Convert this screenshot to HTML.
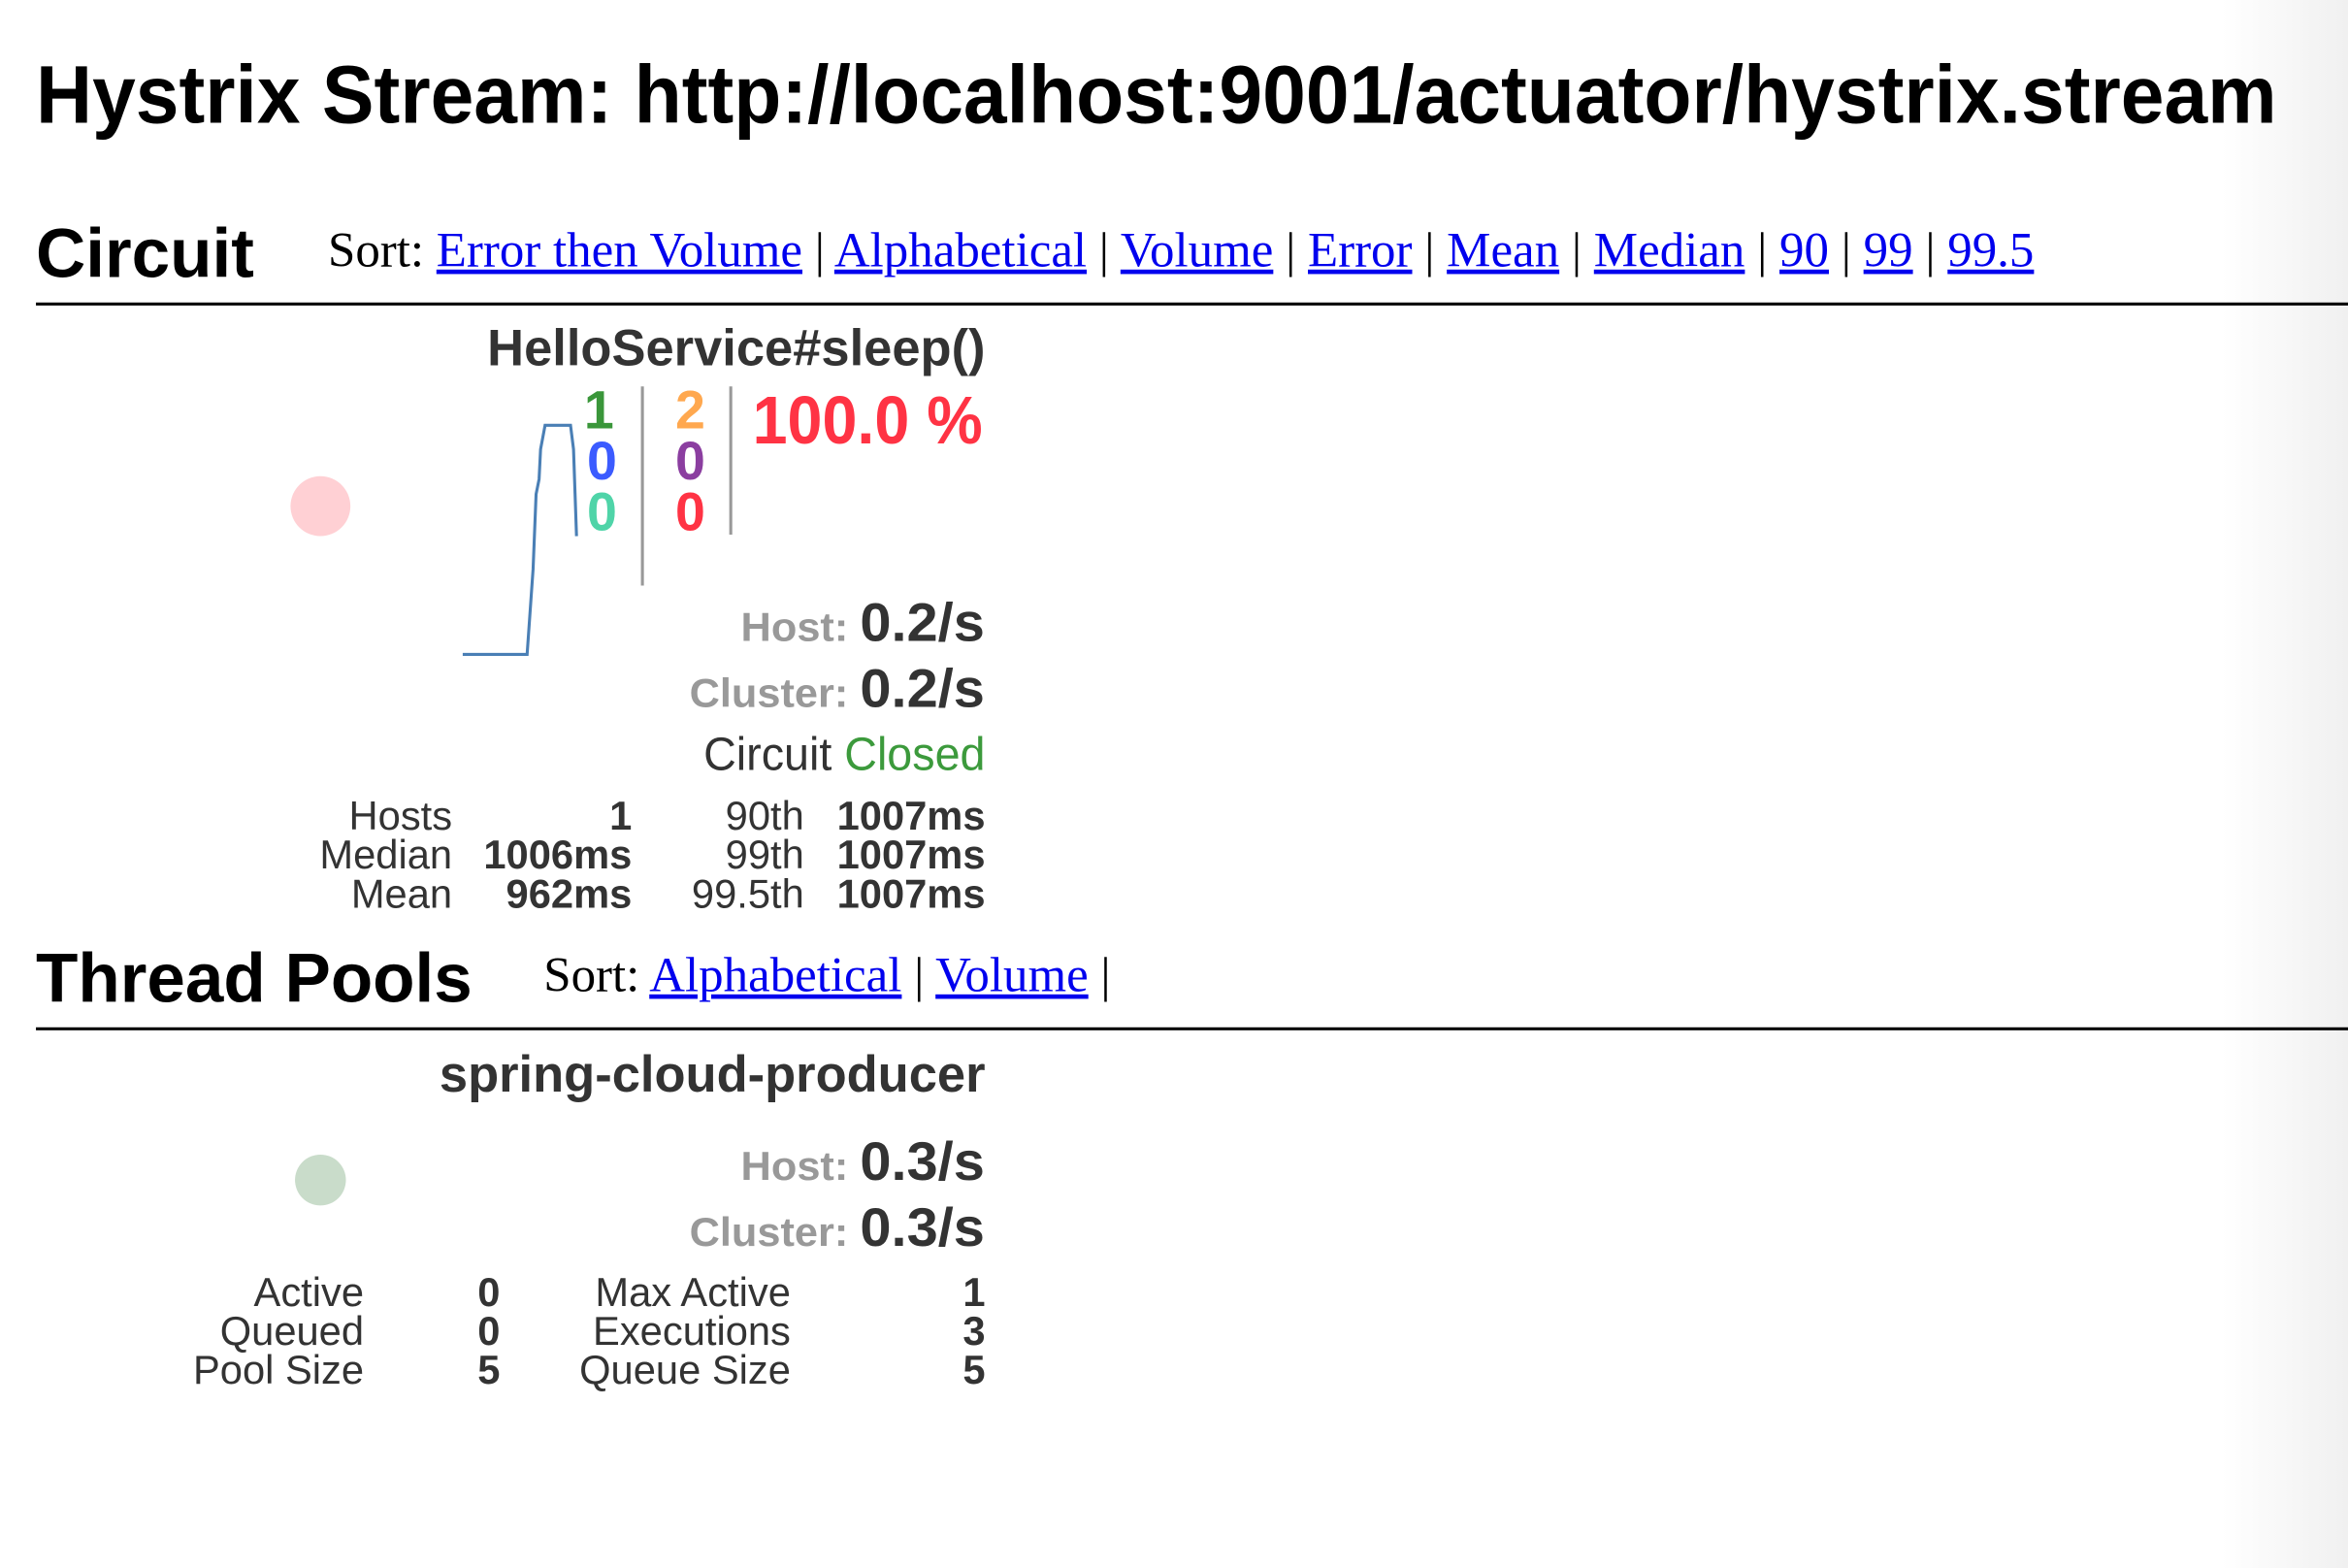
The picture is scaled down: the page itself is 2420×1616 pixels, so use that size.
<!DOCTYPE html>
<html><head><meta charset="utf-8"><style>
html,body{margin:0;padding:0;width:2420px;height:1616px;overflow:hidden;background:#fff}
#bg{position:absolute;left:0;top:0;width:2420px;height:1616px;background:linear-gradient(to right,#fff 0,#fff 2290px,#f0f0f0 2420px)}
#p{position:absolute;left:0;top:0;width:1568px;height:1047px;transform:scale(1.54337);transform-origin:0 0;font-family:"Liberation Sans",Arial,sans-serif;color:#333}
.a{position:absolute;white-space:nowrap;line-height:1}
.l{transform-origin:0 0}
.r{transform-origin:100% 0;text-align:right}
.serif{font-family:"Liberation Serif","Times New Roman",serif;color:#000}
.serif a{color:#00e;text-decoration:underline}
.hr{position:absolute;left:24px;width:1544px;height:2px;background:#000}
.b{font-weight:bold}
.g{color:#999;font-weight:bold}
</style></head><body><div id="bg"></div>
<div id="p">
<div class="a l b" style="left:24px;top:36px;font-size:55px;color:#000;transform:scaleX(.947)">Hystrix Stream: http://localhost:9001/actuator/hystrix.stream</div>
<div class="a l b" style="left:24px;top:146px;font-size:46px;color:#000">Circuit</div>
<div class="a serif" style="left:219px;top:152px;font-size:33px">Sort: <a>Error then Volume</a> | <a>Alphabetical</a> | <a>Volume</a> | <a>Error</a> | <a>Mean</a> | <a>Median</a> | <a>90</a> | <a>99</a> | <a>99.5</a></div>
<div class="hr" style="top:202px"></div>

<div class="a r b" style="right:910px;top:216px;font-size:34px">HelloService#sleep()</div>
<div style="position:absolute;left:194px;top:318px;width:40px;height:40px;border-radius:50%;background:#ffd0d4"></div>
<svg style="position:absolute;left:0;top:0" width="700" height="700"><polyline points="309,437 352,437 356,380 358,330 360,320 361,300 364,284 381,284 383,300 385,358" fill="none" stroke="#4a7fb5" stroke-width="2"/>
<line x1="429" y1="258" x2="429" y2="391" stroke="#999" stroke-width="2"/><line x1="488" y1="258" x2="488" y2="357" stroke="#999" stroke-width="2"/></svg>
<div class="a r b" style="right:1158px;top:256px;font-size:36px;color:#3a963a">1</div>
<div class="a r b" style="right:1156px;top:290px;font-size:36px;color:#3b5bff">0</div>
<div class="a r b" style="right:1156px;top:324px;font-size:36px;color:#4fd4a8">0</div>
<div class="a r b" style="right:1097px;top:256px;font-size:36px;color:#ffa84f">2</div>
<div class="a r b" style="right:1097px;top:290px;font-size:36px;color:#8b3ea0">0</div>
<div class="a r b" style="right:1097px;top:324px;font-size:36px;color:#ff3344">0</div>
<div class="a r b" style="right:912px;top:258px;font-size:45px;color:#ff3344;transform:scaleX(.93)">100.0 %</div>

<div class="a r" style="right:910px;top:398px;font-size:36px;transform:scaleX(1.04)"><span class="g" style="font-size:27px">Host: </span><b>0.2/s</b></div>
<div class="a r" style="right:910px;top:442px;font-size:36px;transform:scaleX(1.04)"><span class="g" style="font-size:27px">Cluster: </span><b>0.2/s</b></div>
<div class="a r" style="right:910px;top:488px;font-size:31px;transform:scaleX(.975)">Circuit <span style="color:#3c9a3c">Closed</span></div>

<div class="a r" style="right:1266px;top:532px;font-size:27px;line-height:26px">Hosts<br>Median<br>Mean</div>
<div class="a r b" style="right:1146px;top:532px;font-size:27px;line-height:26px">1<br>1006ms<br>962ms</div>
<div class="a r" style="right:1031px;top:532px;font-size:27px;line-height:26px">90th<br>99th<br>99.5th</div>
<div class="a r b" style="right:910px;top:532px;font-size:27px;line-height:26px">1007ms<br>1007ms<br>1007ms</div>

<div class="a l b" style="left:24px;top:630px;font-size:46px;color:#000">Thread Pools</div>
<div class="a serif" style="left:363px;top:636px;font-size:33px">Sort: <a>Alphabetical</a> | <a>Volume</a> |</div>
<div class="hr" style="top:686px"></div>

<div class="a r b" style="right:910px;top:701px;font-size:34px">spring-cloud-producer</div>
<div style="position:absolute;left:197px;top:771px;width:34px;height:34px;border-radius:50%;background:#c9dcca"></div>
<div class="a r" style="right:910px;top:758px;font-size:36px;transform:scaleX(1.04)"><span class="g" style="font-size:27px">Host: </span><b>0.3/s</b></div>
<div class="a r" style="right:910px;top:802px;font-size:36px;transform:scaleX(1.04)"><span class="g" style="font-size:27px">Cluster: </span><b>0.3/s</b></div>

<div class="a r" style="right:1325px;top:850px;font-size:27px;line-height:26px">Active<br>Queued<br>Pool Size</div>
<div class="a r b" style="right:1234px;top:850px;font-size:27px;line-height:26px">0<br>0<br>5</div>
<div class="a r" style="right:1040px;top:850px;font-size:27px;line-height:26px">Max Active<br>Executions<br>Queue Size</div>
<div class="a r b" style="right:910px;top:850px;font-size:27px;line-height:26px">1<br>3<br>5</div>
</div>
</body></html>
